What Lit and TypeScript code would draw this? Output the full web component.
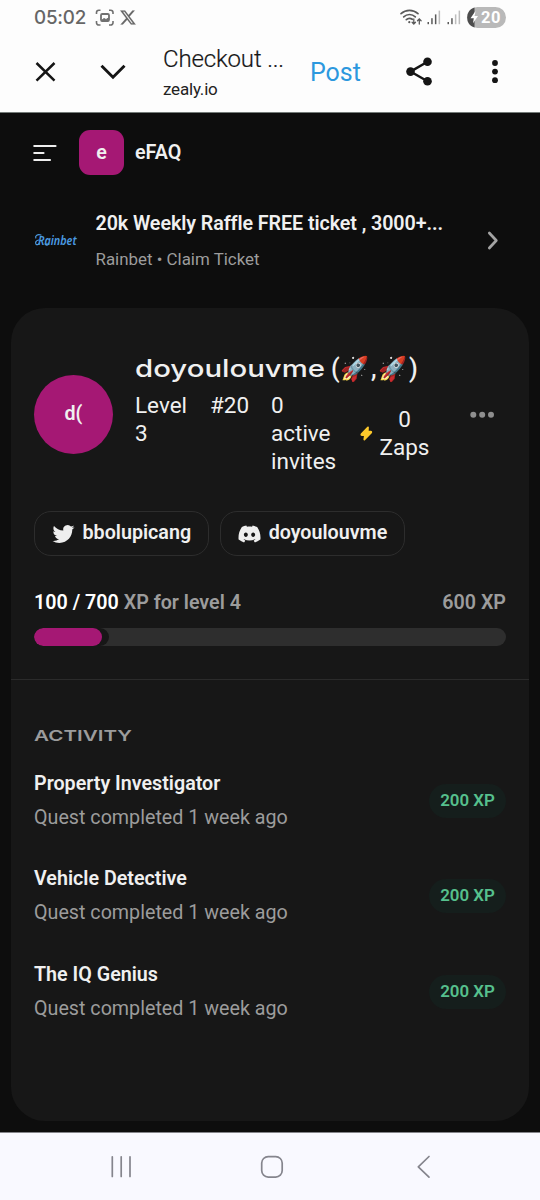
import { LitElement, html, css, svg } from "lit";
import { customElement } from "lit/decorators.js";

const TWITTER =
  "M23.953 4.57a10 10 0 01-2.825.775 4.958 4.958 0 002.163-2.723c-.951.555-2.005.959-3.127 1.184a4.92 4.92 0 00-8.384 4.482C7.69 8.095 4.067 6.13 1.64 3.162a4.822 4.822 0 00-.666 2.475c0 1.71.87 3.213 2.188 4.096a4.904 4.904 0 01-2.228-.616v.06a4.923 4.923 0 003.946 4.827 4.996 4.996 0 01-2.212.085 4.936 4.936 0 004.604 3.417 9.867 9.867 0 01-6.102 2.105c-.39 0-.779-.023-1.17-.067a13.995 13.995 0 007.557 2.209c9.053 0 13.998-7.496 13.998-13.985 0-.21 0-.42-.015-.63A9.935 9.935 0 0024 4.59z";
const DISCORD =
  "M20.317 4.3698a19.7913 19.7913 0 00-4.8851-1.5152.0741.0741 0 00-.0785.0371c-.211.3753-.4447.8648-.6083 1.2495-1.8447-.2762-3.68-.2762-5.4868 0-.1636-.3933-.4058-.8742-.6177-1.2495a.077.077 0 00-.0785-.037 19.7363 19.7363 0 00-4.8852 1.515.0699.0699 0 00-.0321.0277C.5334 9.0458-.319 13.5799.0992 18.0578a.0824.0824 0 00.0312.0561c2.0528 1.5076 4.0413 2.4228 5.9929 3.0294a.0777.0777 0 00.0842-.0276c.4616-.6304.8731-1.2952 1.226-1.9942a.076.076 0 00-.0416-.1057c-.6528-.2476-1.2743-.5495-1.8722-.8923a.077.077 0 01-.0076-.1277c.1258-.0943.2517-.1923.3718-.2914a.0743.0743 0 01.0776-.0105c3.9278 1.7933 8.18 1.7933 12.0614 0a.0739.0739 0 01.0785.0095c.1202.099.246.1981.3728.2924a.077.077 0 01-.0066.1276 12.2986 12.2986 0 01-1.873.8914.0766.0766 0 00-.0407.1067c.3604.698.7719 1.3628 1.225 1.9932a.076.076 0 00.0842.0286c1.961-.6067 3.9495-1.5219 6.0023-3.0294a.077.077 0 00.0313-.0552c.5004-5.177-.8382-9.6739-3.5485-13.6604a.061.061 0 00-.0312-.0286zM8.02 15.3312c-1.1825 0-2.1569-1.0857-2.1569-2.419 0-1.3332.9555-2.4189 2.157-2.4189 1.2108 0 2.1757 1.0952 2.1568 2.419 0 1.3332-.9555 2.4189-2.1569 2.4189zm7.9748 0c-1.1825 0-2.1569-1.0857-2.1569-2.419 0-1.3332.9554-2.4189 2.1569-2.4189 1.2108 0 2.1757 1.0952 2.1568 2.419 0 1.3332-.946 2.4189-2.1568 2.4189Z";
const X_LOGO =
  "M18.244 2.25h3.308l-7.227 8.26 8.502 11.24H16.17l-5.214-6.817L4.99 21.75H1.68l7.73-8.835L1.254 2.25H8.08l4.713 6.231zm-1.161 17.52h1.833L7.084 4.126H5.117z";

const signal = (x: number, lit: number) =>
  [0, 1, 2, 3].map(
    (i) => svg`<rect x=${x + i * 3.7} y=${22 - i * 3.8} width="1.5" height=${2.2 + i * 3.8}
      fill=${i < lit ? "#5a5a5a" : "#bdbdbd"}/>`
  );

@customElement("status-bar")
class StatusBar extends LitElement {
  static styles = css`
    :host { display: flex; height: 36px; padding: 0 34px; align-items: center; justify-content: space-between; background: #fdfdfd; }
    .left { display: flex; align-items: center; }
    .time { font: 500 18.8px/36px Inter, sans-serif; color: #666; width: 61px; letter-spacing: -0.2px; white-space: nowrap; }
    .badge { font: 700 16.5px Roboto, sans-serif; fill: #fff; }
    svg { display: block; }
  `;
  render() {
    return html`
      <div class="left">
        <span class="time">05:02</span>
        <svg width="42" height="36" viewBox="95 0 42 36" fill="none" stroke="#707070" stroke-width="1.6">
          <path d="M96.5 14v-1.5a2.3 2.3 0 0 1 2.3-2.3h1.7M109 10.200h1.7a2.300 2.300 0 0 1 2.300 2.300V14M113 21v1.700a2.300 2.300 0 0 1-2.300 2.300H109M100.500 25h-1.700a2.300 2.300 0 0 1-2.300-2.300V21"/>
          <rect x="101" y="14" width="8" height="7" rx="1.300" stroke-width="1.800"/>
          <path d="M101.500 20.500l2.500-2 2 1 2.500-1.500v3h-7z" fill="#707070" stroke-width="1"/>
          <path d=${X_LOGO} transform="translate(119.300 8.900) scale(.72)" fill="#686868" stroke="#686868" stroke-width=".2"/>
        </svg>
      </div>
      <svg width="108" height="36" viewBox="398 0 108 36">
        <g fill="none" stroke="#5a5a5a" stroke-width="1.700" stroke-linecap="round">
          <path d="M401 13.600a12.600 12.600 0 0 1 17 0M403.700 16.800a8.500 8.500 0 0 1 11.600 0M406.300 19.700a4.800 4.800 0 0 1 6 -.4"/>
          <path d="M413.800 19v5m-1.700-1.700l1.700 1.700 1.700-1.700M419.300 24v-5m-1.800 1.700l1.800-1.700 1.800 1.700" stroke-width="1.300"/>
        </g>
        <circle cx="409.300" cy="22.200" r="1.100" fill="#5a5a5a"/>
        ${signal(427.5, 3)}${signal(447.5, 2)}
        <rect x="467" y="7" width="39" height="21" rx="10.500" fill="#b9b9b9"/>
        <path d="M474.500 7.500v20a10.500 10.500 0 0 1 0-20z" fill="#4c4c4c"/>
        <path d="M475.500 11l-5 7.300h3.300l-.8 5 5-7.300h-3.300z" fill="#fff"/>
        <text class="badge" x="481" y="23.400" textLength="19.500">20</text>
      </svg>
    `;
  }
}

@customElement("browser-bar")
class BrowserBar extends LitElement {
  static styles = css`
    :host { display: flex; align-items: center; background: #fdfdfd; border-bottom: 1px solid #747b78; }
    svg { display: block; flex: none; }
    .page { width: 147px; flex: none; padding-bottom: 3px; }
    .title { font: 300 24px/30px Roboto, sans-serif; color: #161616; white-space: nowrap; letter-spacing: -0.15px; -webkit-text-stroke: 0.2px #161616; }
    .url { font: 400 17px/24px Roboto, sans-serif; color: #222; margin-top: 3px; letter-spacing: -0.2px; }
    .post { font: 400 25px/30px Roboto, sans-serif; color: #2c98de; width: 92px; padding-bottom: 2px; }
  `;
  render() {
    return html`
      <svg width="163" height="76" viewBox="0 36 163 76" fill="none" stroke="#151515" stroke-width="2.500">
        <path d="M36.500 63L54.500 80.700M54.500 63L36.500 80.700"/>
        <path d="M101.500 65.700L113 77.200L124.500 65.700" stroke-width="2.900"/>
      </svg>
      <div class="page">
        <div class="title">Checkout ...</div>
        <div class="url">zealy.io</div>
      </div>
      <div class="post">Post</div>
      <svg width="138" height="76" viewBox="402 36 138 76" fill="#151515">
        <path d="M427.500 61.800L410.500 71.600L427.500 81.300" fill="none" stroke="#151515" stroke-width="2.400"/>
        <circle cx="427.500" cy="61.800" r="4.300"/><circle cx="410.500" cy="71.600" r="4.300"/><circle cx="427.500" cy="81.300" r="4.300"/>
        <circle cx="495" cy="63" r="2.900"/><circle cx="495" cy="71.600" r="2.900"/><circle cx="495" cy="80.200" r="2.900"/>
      </svg>
    `;
  }
}

const quests = ["Property Investigator", "Vehicle Detective", "The IQ Genius"];

@customElement("app-root")
class AppRoot extends LitElement {
  static styles = css`
    :host { display: flex; flex-direction: column; width: 540px; height: 1200px; overflow: hidden; background: #0d0d0d; color: #f0f0f0; font-family: Roboto, sans-serif; font-size: 19.7px; line-height: 28px; }
    * { box-sizing: border-box; }
    svg { display: block; flex: none; }
    status-bar { flex: none; }
    browser-bar { height: 77px; flex: none; }
    .community { display: flex; align-items: center; height: 79px; padding-left: 33px; font-weight: 600; }
    .tile { width: 45px; height: 45px; border-radius: 11px; background: #a51874; margin: 0 11px 0 22px; text-align: center; line-height: 45px; }
    .ad { display: flex; align-items: center; height: 62px; margin-top: 17px; padding-left: 34px; }
    .ad-body { margin-left: 13.500px; width: 391px; padding-top: 1px; }
    .ad-title { font-weight: 600; white-space: nowrap; letter-spacing: -0.08px; }
    .ad-sub { color: #9c9c9c; font-size: 16.900px; line-height: 22.500px; margin-top: 10px; }
    .logo { font: italic 600 13px "Noto Sans", sans-serif; fill: #4b9ce4; }
    .card { height: 813px; margin: 37px 11px 11px; border-radius: 34px; background: #171717; flex: none; }
    .top { padding: 46.400px 23px 0; height: 371px; }
    .profile { display: flex; align-items: center; height: 121.200px; }
    .avatar { width: 79px; height: 79px; border-radius: 50%; background: #a51874; text-align: center; line-height: 77px; font-weight: 600; flex: none; margin-right: 22px; }
    .info { width: 335px; flex: none; }
    .wide { font: 550 24px Inter, sans-serif; fill: #f0f0f0; }
    .paren { font: 500 25px Roboto, sans-serif; fill: #f0f0f0; }
    .emoji { font: 24px "Noto Color Emoji", sans-serif; }
    .stats { display: flex; font-size: 22.500px; line-height: 28.100px; height: 84.400px; }
    .level { width: 75px; padding-right: 20px; }
    .rank { width: 61px; }
    .invites { width: 88.500px; padding-right: 20px; }
    .zaps { display: flex; align-items: center; text-align: center; gap: 7px; }
    .zaps-text { width: 50px; }
    .chips { display: flex; gap: 11.500px; margin-top: 35.400px; font-weight: 600; }
    .chip { display: flex; align-items: center; height: 45px; border: 1px solid #2d2d2d; border-radius: 17px; padding: 0 16.500px 1px 17px; gap: 7.500px; white-space: nowrap; }
    .chip svg { margin-top: 2px; }
    .xp { display: flex; justify-content: space-between; margin-top: 33.200px; font-weight: 600; color: #9c9c9c; }
    .now { color: #fff; }
    .bar { display: flex; height: 18px; border-radius: 9px; background: #2e2e2e; margin-top: 10.800px; overflow: hidden; }
    .done { background: #171717; border-radius: 0 13px 13px 0; padding-right: 7.500px; width: 75px; }
    .fill { height: 18px; border-radius: 9px; background: #a51874; }
    .activity { border-top: 1px solid #2b2b2b; padding: 43px 23px 0; }
    .heading { font: 600 15px Inter, sans-serif; fill: #9c9c9c; }
    .list { display: flex; flex-direction: column; gap: 33.600px; margin-top: 22.800px; }
    .item { display: flex; justify-content: space-between; align-items: center; height: 62px; }
    .name { font-weight: 600; }
    .when { color: #9c9c9c; margin-top: 6px; }
    .pill { width: 77px; height: 34px; border-radius: 17px; background: #151e1c; color: #56c08d; font-weight: 600; font-size: 16.900px; line-height: 33px; text-align: center; }
    .nav { height: 68px; flex: none; background: #f9f9ff; border-top: 1px solid #85858a; }
  `;

  render() {
    return html`
      <status-bar></status-bar>
      <browser-bar></browser-bar>

      <div class="community">
        <svg width="24" height="20" viewBox="0 0 24 20" stroke="#eee" stroke-width="2.200" stroke-linecap="round">
          <path d="M1.300 3H22.500M1.300 10H10.500M1.300 17H17"/>
        </svg>
        <div class="tile">e</div>
        <div>eFAQ</div>
      </div>

      <div class="ad">
        <svg width="48" height="32" viewBox="0 -4 48 32">
          <text class="logo" x="4" y="16.500" textLength="38.500" lengthAdjust="spacingAndGlyphs">Rainbet</text>
          <path d="M7 7C3.500 6 1 7.500 1.800 10M4.500 12C2 12.500 1 14.500 2 16.200c1 .8 2.300.4 3-.6M11 16c.8 1.300 2.300 1.500 3.300.3" fill="none" stroke="#4b9ce4" stroke-width="1.200" stroke-linecap="round"/>
        </svg>
        <div class="ad-body">
          <div class="ad-title">20k Weekly Raffle FREE ticket , 3000+...</div>
          <div class="ad-sub">Rainbet • Claim Ticket</div>
        </div>
        <svg width="12" height="20" viewBox="0 0 12 20" fill="none" stroke="#a3a3a3" stroke-width="2.700" stroke-linecap="round" stroke-linejoin="round">
          <path d="M2.300 3L9.300 10.500L2.300 18"/>
        </svg>
      </div>

      <div class="card">
        <div class="top">
          <div class="profile">
            <div class="avatar">d(</div>
            <div class="info">
              <svg width="300" height="36.800" viewBox="0 0 300 36.800">
                <text class="wide" x="0" y="23" textLength="190" lengthAdjust="spacingAndGlyphs">doyoulouvme</text>
                <text class="paren" x="196" y="23">(</text>
                <text class="emoji" x="205.500" y="22.800" textLength="29" lengthAdjust="spacingAndGlyphs">🚀</text>
                <text class="paren" x="236" y="23">,</text>
                <text class="emoji" x="243" y="22.800" textLength="29" lengthAdjust="spacingAndGlyphs">🚀</text>
                <text class="paren" x="274" y="23">)</text>
              </svg>
              <div class="stats">
                <div class="level">Level 3</div>
                <div class="rank">#20</div>
                <div class="invites">0 active invites</div>
                <div class="zaps">
                  <svg width="13" height="15" viewBox="0 0 13 15"><path d="M8 1.500L1.500 8.200c-.3.500-.1.900.4.900h3.100l-.7 4.400 6.800-6.900c.4-.5.2-.9-.4-.9H7.700z" fill="#fdc92b" stroke="#fdc92b" stroke-width="1.800" stroke-linejoin="round"/></svg>
                  <div class="zaps-text">0 Zaps</div>
                </div>
              </div>
            </div>
            <svg width="26" height="8" viewBox="0 0 26 8" fill="#8e8e8e">
              <circle cx="3.300" cy="3.700" r="3"/><circle cx="12.200" cy="3.700" r="3"/><circle cx="21" cy="3.700" r="3"/>
            </svg>
          </div>

          <div class="chips">
            <div class="chip">
              <svg width="23" height="22" viewBox="0 0 24 24" fill="#eee"><path d=${TWITTER}/></svg>
              <span>bbolupicang</span>
            </div>
            <div class="chip">
              <svg width="23" height="22" viewBox="0 0 24 24" fill="#eee"><path d=${DISCORD}/></svg>
              <span>doyoulouvme</span>
            </div>
          </div>

          <div class="xp">
            <div><span class="now">100 / 700</span> XP for level 4</div>
            <div>600 XP</div>
          </div>
          <div class="bar"><div class="done"><div class="fill"></div></div></div>
        </div>

        <div class="activity">
          <svg width="100" height="24" viewBox="0 0 100 24">
            <text class="heading" x="0" y="18" textLength="98" lengthAdjust="spacingAndGlyphs">ACTIVITY</text>
          </svg>
          <div class="list">
            ${quests.map(
              (q) => html`<div class="item">
                <div>
                  <div class="name">${q}</div>
                  <div class="when">Quest completed 1 week ago</div>
                </div>
                <div class="pill">200 XP</div>
              </div>`
            )}
          </div>
        </div>
      </div>

      <div class="nav">
        <svg width="540" height="67" viewBox="0 1133 540 67" fill="none" stroke="#85858d" stroke-width="1.700" stroke-linecap="round">
          <path d="M112.300 1156.800V1176.500M121.200 1156.800V1176.500M130 1156.800V1176.500"/>
          <rect x="261.700" y="1156.600" width="20.500" height="20.500" rx="6.500"/>
          <path d="M429 1156.500L418.300 1166.800L429 1177.200" stroke-linejoin="round"/>
        </svg>
      </div>
    `;
  }
}
